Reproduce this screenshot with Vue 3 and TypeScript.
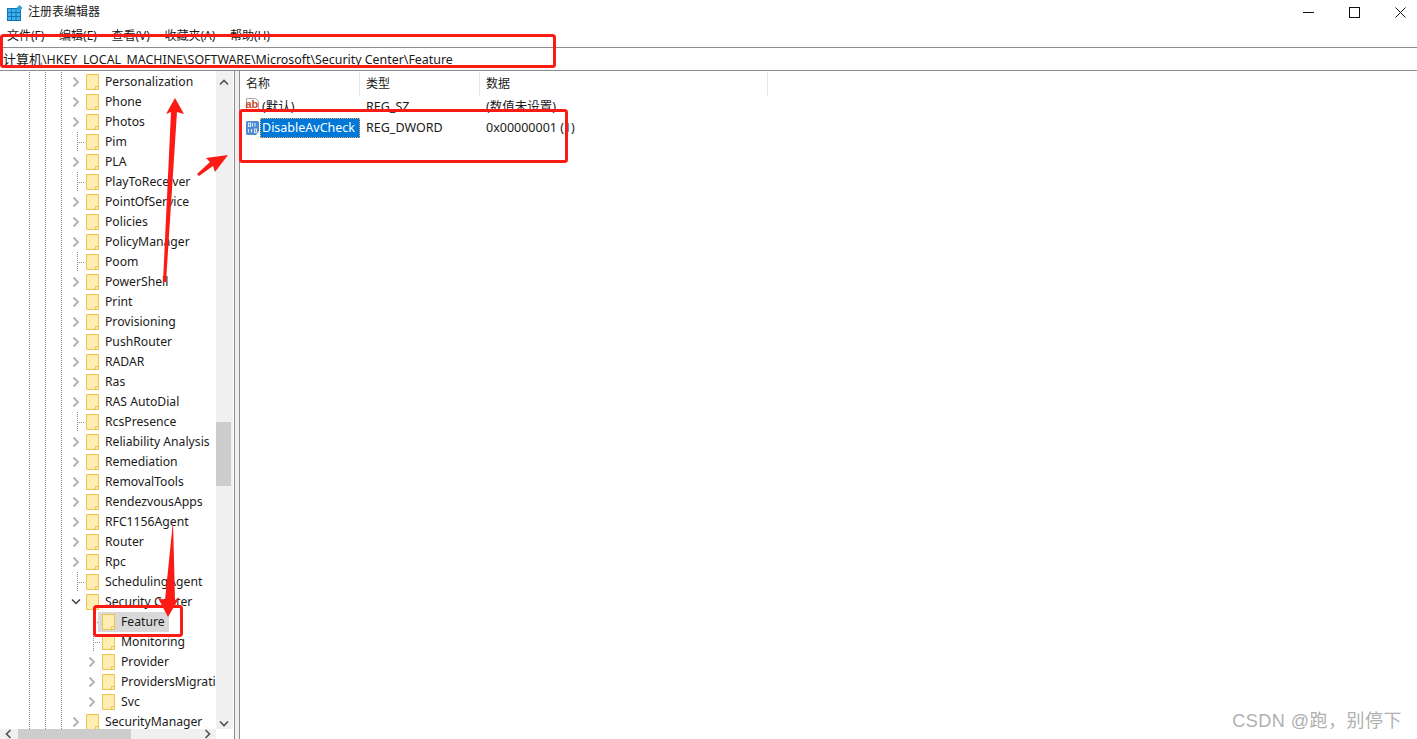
<script setup lang="ts">
type Kind = 'closed' | 'leaf' | 'open'
interface TreeRow { name: string; kind: Kind; depth: number; selected?: boolean }

const c = (name: string): TreeRow => ({ name, kind: 'closed', depth: 0 })
const l = (name: string): TreeRow => ({ name, kind: 'leaf', depth: 0 })

const rows: TreeRow[] = [
  c('Personalization'), c('Phone'), c('Photos'), l('Pim'), c('PLA'), l('PlayToReceiver'),
  c('PointOfService'), c('Policies'), c('PolicyManager'), l('Poom'), c('PowerShell'), c('Print'),
  c('Provisioning'), c('PushRouter'), c('RADAR'), c('Ras'), c('RAS AutoDial'), l('RcsPresence'),
  c('Reliability Analysis'), c('Remediation'), c('RemovalTools'), c('RendezvousApps'),
  c('RFC1156Agent'), c('Router'), c('Rpc'), l('SchedulingAgent'),
  { name: 'Security Center', kind: 'open', depth: 0 },
  { name: 'Feature', kind: 'leaf', depth: 1, selected: true },
  { name: 'Monitoring', kind: 'leaf', depth: 1 },
  { name: 'Provider', kind: 'closed', depth: 1 },
  { name: 'ProvidersMigration', kind: 'closed', depth: 1 },
  { name: 'Svc', kind: 'closed', depth: 1 },
  c('SecurityManager'),
]
const menus = ['文件(F)', '编辑(E)', '查看(V)', '收藏夹(A)', '帮助(H)']
</script>

<template>
  <div class="window">
    <header class="titlebar">
      <svg class="app-icon" width="16" height="16" viewBox="0 0 16 16">
        <rect x="0.500" y="3.500" width="13" height="12" fill="#3fb1ea" stroke="#1273b5" />
        <path d="M4.500 3.500v12M9 3.500v12M0.500 7.500h13M0.500 11.500h13" stroke="#1273b5" stroke-width="1" />
        <path d="M12.500 0l3 3-3 3-3-3z" fill="#2d9fe0" />
      </svg>
      <span class="title">注册表编辑器</span>
      <div class="controls">
        <svg width="11" height="11" viewBox="0 0 11 11"><path d="M0 5.500h11" stroke="#111" /></svg>
        <svg width="11" height="11" viewBox="0 0 11 11"><rect x="0.500" y="0.500" width="10" height="10" fill="none" stroke="#111" /></svg>
        <svg width="11" height="11" viewBox="0 0 11 11"><path d="M0.500 0.500l10 10M10.500 0.500l-10 10" stroke="#111" /></svg>
      </div>
    </header>

    <nav class="menubar">
      <span v-for="m in menus" :key="m">{{ m }}</span>
    </nav>

    <div class="address"><span class="root">计算机</span>\HKEY_LOCAL_MACHINE\SOFTWARE\Microsoft\Security Center\Feature</div>

    <main class="main">
      <section class="left">
        <div class="tree">
          <div v-for="r in rows" :key="r.name" class="row">
            <i class="guide" /><i class="guide" /><i class="guide" />
            <i v-if="r.depth" class="cell" />
            <span class="cell toggle">
              <svg v-if="r.kind === 'closed'" width="8" height="12" viewBox="0 0 8 12">
                <path d="M1.500 1.500L6 6l-4.500 4.500" fill="none" stroke="#b0b0b0" stroke-width="1.800" />
              </svg>
              <svg v-else-if="r.kind === 'open'" width="10" height="8" viewBox="0 0 10 8">
                <path d="M1 1.500l4 4 4-4" fill="none" stroke="#404040" stroke-width="1.500" />
              </svg>
              <i v-else class="connector" />
            </span>
            <span class="node" :class="{ selected: r.selected }">
              <svg class="folder" width="13" height="16" viewBox="0 0 13 16">
                <rect x="0.500" y="0.500" width="12" height="15" fill="#fde9a0" stroke="#eac656" />
                <rect x="1.500" y="1.500" width="10" height="13" fill="#ffeeb4" />
                <path d="M9.500 15.500v-3h3" fill="#fde9a0" stroke="#eac656" />
              </svg>
              <span class="label">{{ r.name }}</span>
            </span>
          </div>
        </div>
        <div class="vscroll">
          <svg width="10" height="7" viewBox="0 0 10 7"><path d="M1 5.500l4-4 4 4" fill="none" stroke="#505050" stroke-width="1.600" /></svg>
          <div class="vtrack"><div class="vthumb" /></div>
          <svg width="10" height="7" viewBox="0 0 10 7"><path d="M1 1.500l4 4 4-4" fill="none" stroke="#505050" stroke-width="1.600" /></svg>
        </div>
        <div class="hscroll">
          <svg width="7" height="10" viewBox="0 0 7 10"><path d="M5.500 1l-4 4 4 4" fill="none" stroke="#505050" stroke-width="1.600" /></svg>
          <div class="hthumb" />
          <svg width="7" height="10" viewBox="0 0 7 10"><path d="M1.500 1l4 4-4 4" fill="none" stroke="#505050" stroke-width="1.600" /></svg>
        </div>
      </section>

      <div class="splitter" />

      <section class="list">
        <div class="list-head">
          <span class="col-name">名称</span>
          <span class="col-type">类型</span>
          <span class="col-data">数据</span>
        </div>
        <div class="list-row first">
          <span class="col-name name-cell">
            <svg class="value-icon ab-icon" width="15" height="16" viewBox="0 0 15 16">
              <path d="M1.500 1.500h9l3 3v9.500h-12z" fill="#fff" stroke="#a8a8a8" />
              <text x="0.500" y="10.500" class="ab">ab</text>
            </svg>
            <span class="value-name">(默认)</span>
          </span>
          <span class="col-type">REG_SZ</span>
          <span class="col-data">(数值未设置)</span>
        </div>
        <div class="list-row">
          <span class="col-name name-cell">
            <svg class="value-icon" width="15" height="16" viewBox="0 0 15 16">
              <path d="M2 1h11l1 1v9l-3 4H2l-1-1V2z" fill="#4f8bcf" />
              <path d="M3.500 3h2v3.500h-2zM10 3v3.500M7.500 3v3.500M3.500 9v3.500M6.500 9v3.500M9.500 9h2v3.500h-2z" fill="none" stroke="#d9ecfb" stroke-width="1.100" />
            </svg>
            <span class="value-name active">DisableAvCheck</span>
          </span>
          <span class="col-type">REG_DWORD</span>
          <span class="col-data">0x00000001 (1)</span>
        </div>
      </section>
    </main>

    <svg class="marks" width="1417" height="739" viewBox="0 0 1417 739">
      <g fill="none" stroke="#fb1b14" stroke-width="3">
        <rect x="1.500" y="35.500" width="553" height="31" rx="2" />
        <rect x="240.500" y="110.500" width="326" height="51" rx="2" />
        <rect x="94.500" y="606.500" width="87" height="29" rx="2" />
      </g>
      <g fill="#fb1b14">
        <path d="M175 98L184 114 177 112 166 282 163 282 171 112 166 114z" />
        <path d="M228 155L215 172 213 166 199 176 197 174 210 162 206 158z" />
        <path d="M173 521L175 600 179 598 168 617 158 598 165 600z" />
      </g>
    </svg>

    <div class="watermark">CSDN @跑，别停下</div>
  </div>
</template>

<style>
html, body { margin: 0; background: #fff; }
</style>

<style scoped>
.window {
  position: relative;
  width: 1417px;
  height: 739px;
  overflow: hidden;
  display: flex;
  flex-direction: column;
  background: #fff;
  color: #1a1a1a;
  font: 12.2px/20px "Noto Sans", "Noto Sans CJK SC", sans-serif;
}
.titlebar {
  height: 24px;
  flex: none;
  display: flex;
  align-items: center;
  padding-left: 7px;
}
.app-icon { margin-right: 5px; margin-top: 1px; }
.title { font-size: 12px; }
.controls {
  margin-left: auto;
  display: flex;
  gap: 35px;
  padding-right: 11px;
}
.menubar {
  height: 23px;
  flex: none;
  display: flex;
  align-items: center;
  gap: 14.600px;
  padding-left: 7px;
  font-size: 12px;
}
.address {
  height: 22px;
  flex: none;
  line-height: 22px;
  padding-left: 3px;
  border-top: 1px solid #8e8e8e;
  border-bottom: 1px solid #8e8e8e;
  font-size: 12.400px;
  white-space: nowrap;
}
.root { font-size: 13px; }
.main {
  flex: 1;
  min-height: 0;
  display: flex;
}
.left {
  width: 233px;
  flex: none;
  display: grid;
  grid-template-columns: 216px 17px;
  grid-template-rows: 1fr 10px;
  min-height: 0;
}
.tree {
  overflow: hidden;
  padding-top: 1px;
  min-height: 0;
}
.row {
  height: 20px;
  display: flex;
  padding-left: 21px;
  white-space: nowrap;
}
.guide, .cell {
  width: 16px;
  flex: none;
  height: 20px;
  display: block;
}
.guide {
  background: repeating-linear-gradient(to bottom, #8a8a8a 0 1px, transparent 1px 2px) no-repeat 8px 0 / 1px 100%;
}
.toggle {
  position: relative;
  display: flex;
  align-items: center;
  justify-content: center;
}
.toggle svg { margin-right: 3px; }
.connector {
  position: absolute;
  left: 8px;
  top: 0;
  width: 7px;
  height: 20px;
  background:
    repeating-linear-gradient(to bottom, #8a8a8a 0 1px, transparent 1px 2px) no-repeat 0 0 / 1px 100%,
    repeating-linear-gradient(to right, #8a8a8a 0 1px, transparent 1px 2px) no-repeat 0 10px / 100% 1px;
}
.node {
  display: flex;
  align-items: center;
  flex: none;
  margin-left: -3px;
  padding: 0 4px;
  position: relative;
}
.node.selected { background: #d9d9d9; }
.folder { flex: none; margin-right: 6px; }
.vscroll {
  background: #f0f0f0;
  display: flex;
  flex-direction: column;
  align-items: center;
  padding: 8px 2px 2px 0;
  box-sizing: border-box;
  min-height: 0;
}
.vtrack {
  flex: 1;
  width: 100%;
  position: relative;
}
.vthumb {
  position: absolute;
  top: 336px;
  left: 0;
  width: 15px;
  height: 64px;
  background: #cdcdcd;
}
.hscroll {
  background: #f0f0f0;
  display: flex;
  align-items: center;
  justify-content: space-between;
  padding: 0 5px;
  position: relative;
}
.hthumb {
  position: absolute;
  left: 18px;
  top: 0;
  width: 113px;
  height: 100%;
  background: #cdcdcd;
}
.splitter {
  width: 4px;
  flex: none;
  margin-left: 1px;
  background: #f0f0f0;
  border-left: 1px solid #8e8e8e;
  border-right: 1px solid #8e8e8e;
}
.list {
  flex: 1;
  min-width: 0;
}
.list-head {
  height: 24px;
  margin-top: 1px;
  display: grid;
  grid-template-columns: 120px 120px 288px;
  align-items: center;
  width: 528px;
}
.list-head span {
  border-right: 1px solid #e5e5e5;
  padding-left: 6px;
  height: 24px;
  line-height: 24px;
  font-size: 12px;
}
.list-row {
  display: grid;
  grid-template-columns: 120px 120px 288px;
  width: 528px;
  height: 20px;
  margin-top: 1px;
  align-items: center;
  font-size: 12.500px;
}
.list-row .col-type, .list-row .col-data { padding-left: 6px; }
.name-cell {
  display: flex;
  align-items: center;
  padding-left: 5px;
}
.value-icon { flex: none; }
.ab-icon { margin-top: -5px; }
.value-name {
  padding-left: 2px;
  flex: 1;
  height: 20px;
}
.value-name.active {
  background: #0078d7;
  color: #fff;
  outline: 1px dotted #e8a860;
  outline-offset: -1px;
}
.ab {
  font: 700 11px "Liberation Sans", sans-serif;
  fill: #d04a28;
}
.marks {
  position: absolute;
  left: 0;
  top: 0;
  pointer-events: none;
}
.watermark {
  position: absolute;
  right: 15px;
  bottom: 6px;
  font: 18px/24px "Liberation Sans", "Noto Sans CJK SC", sans-serif;
  letter-spacing: 0.500px;
  color: #b0b0b0;
}
</style>
